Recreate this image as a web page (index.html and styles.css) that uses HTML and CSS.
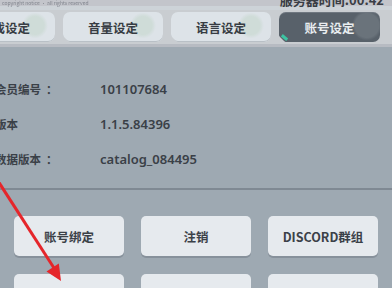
FILE: index.html
```html
<!DOCTYPE html>
<html lang="zh-CN">
<head>
<meta charset="utf-8">
<title>账号设定</title>
<link rel="stylesheet" href="styles.css">
</head>
<body>
<div class="screen">
  <header class="topbar">
    <span class="notice">copyright notice · all rights reserved</span>
    <span class="clock">服务器时间:00:42</span>
  </header>
  <nav class="tabs">
    <div class="tab">游戏设定</div>
    <div class="tab">音量设定</div>
    <div class="tab">语言设定</div>
    <div class="tab active">账号设定<span class="mark"></span></div>
  </nav>
  <div class="band"></div>
  <main class="panel">
    <div class="info">
      <div class="label">会员编号<span class="colon">：</span></div><div class="value">101107684</div>
      <div class="label">版本</div><div class="value">1.1.5.84396</div>
      <div class="label">数据版本<span class="colon">：</span></div><div class="value">catalog_084495</div>
    </div>
    <div class="divider"></div>
    <div class="buttons">
      <div class="btn">账号绑定</div>
      <div class="btn">注销</div>
      <div class="btn">DISCORD群组</div>
      <div class="btn">切换账号</div>
      <div class="btn">用户协议</div>
      <div class="btn">隐私政策</div>
    </div>
  </main>
  <svg class="arrow" width="392" height="288" viewBox="0 0 392 288">
    <line x1="-2" y1="181" x2="54" y2="268" stroke="#e5262b" stroke-width="3"/>
    <polygon points="61,281 46.5,271.5 58.8,263.5" fill="#e5262b"/>
  </svg>
</div>
</body>
</html>
```
FILE: styles.css
```css
* { box-sizing: border-box; }
html, body { margin: 0; padding: 0; }
body {
  width: 392px;
  height: 288px;
  overflow: hidden;
  font-family: "Noto Sans CJK SC", "Noto Sans", sans-serif;
  background: #9ea9b2;
}
.screen {
  position: relative;
  width: 392px;
  height: 288px;
  overflow: hidden;
  background: #9ea9b2;
}
.topbar {
  height: 10px;
  background: linear-gradient(#c3c5cb 0 6px, #cdd3d8 6px);
  display: flex;
  justify-content: space-between;
  align-items: flex-start;
  overflow: hidden;
}
.notice {
  font-size: 5px;
  line-height: 6px;
  color: #80848d;
  padding-left: 2px;
  filter: blur(0.4px);
}
.clock {
  font-size: 13px;
  font-weight: 700;
  line-height: 13px;
  margin-top: -7px;
  margin-right: 8px;
  color: #3a3e45;
}
.tabs {
  height: 34px;
  background: #c9cdd1;
  display: flex;
  gap: 8px;
  padding-top: 2px;
  margin-left: -45px;
}
.tab {
  position: relative;
  width: 100px;
  height: 30px;
  flex: none;
  border-radius: 7px;
  background: radial-gradient(circle at 80% 45%, #cfdcd8 0 9px, transparent 13px), #dde3e8;
  clip-path: polygon(0 0, 100% 0, 100% 100%, 6px 100%, 0 calc(100% - 6px));
  box-shadow: inset 0 -1px 0 #b9c0c6;
  display: flex;
  align-items: center;
  justify-content: center;
  font-size: 12.5px;
  font-weight: 700;
  color: #373c43;
}
.tab.active {
  width: 101px;
  background: radial-gradient(circle at 87% 45%, #6a737b 0 12px, transparent 15px), #58616a;
  color: #e9edf0;
  box-shadow: inset 0 1px 0 #6f7780;
}
.tab.active .mark {
  position: absolute;
  left: 2px;
  bottom: 3px;
  width: 7px;
  height: 3px;
  background: #3cc4a2;
  transform: rotate(40deg);
}
.band {
  height: 3px;
  background: #b7bbc2;
}
.panel {
  padding-top: 24px;
}
.info {
  display: grid;
  grid-template-columns: 105px auto;
  grid-auto-rows: 35px;
  margin-left: -5px;
  align-items: center;
  color: #3a4047;
}
.label { font-size: 11.5px; font-weight: 700; }
.colon { display: inline-block; margin-left: 5px; }
.value {
  font-family: "Noto Sans", sans-serif;
  font-size: 13px;
  font-weight: 600;
}
.divider {
  margin-top: 12px;
  height: 2px;
  background: #7f8993;
}
.buttons {
  display: grid;
  grid-template-columns: repeat(3, 110px);
  grid-auto-rows: 40px;
  column-gap: 17px;
  row-gap: 18px;
  padding: 26px 0 0 14px;
}
.btn {
  background: #e6eaee;
  border-radius: 5px;
  box-shadow: 0 2px 0 #87919b;
  display: flex;
  align-items: center;
  justify-content: center;
  font-size: 12.5px;
  font-weight: 700;
  color: #3b4148;
}
.arrow {
  position: absolute;
  left: 0;
  top: 0;
  pointer-events: none;
}
```
